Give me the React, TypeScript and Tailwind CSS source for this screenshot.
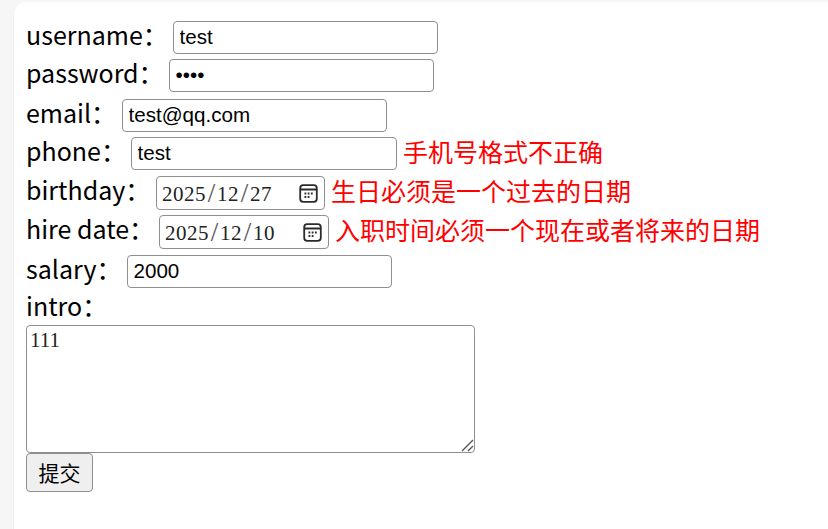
const fieldClass =
  "box-border h-[33px] rounded-[4px] border border-[#8f8f8f] bg-white pl-[5.5px] pr-[6px] pb-[2px] text-[20.6px] leading-none text-black outline-none [font-family:'Liberation_Sans',Arial,sans-serif]";

const rows = [
  { label: "username：", labelWidth: "w-[147px]", value: "test", h: "h-[38px]", w: "w-[265px]" },
  { label: "password：", labelWidth: "w-[143px]", value: "test", type: "password", h: "h-[40px]", w: "w-[265px]" },
  { label: "email：", labelWidth: "w-[96px]", value: "test@qq.com", h: "h-[38px]", w: "w-[265px]" },
  { label: "phone：", labelWidth: "w-[105px]", value: "test", h: "h-[39px]", w: "w-[266px]", error: "手机号格式不正确" },
];

function Slash() {
  return <span className="inline-block w-[11px] text-center align-[-1px] text-[27px] font-light leading-none tracking-normal text-[#555]">/</span>;
}

function DateField({ y, m, d, width }: { y: string; m: string; d: string; width: string }) {
  return (
    <div className={`box-border flex h-[34px] ${width} items-center justify-between rounded-[4px] border border-[#8f8f8f] bg-white pl-[5px] pr-[6px] text-[21px] leading-none tracking-[0.5px] text-[#222] [font-family:'Liberation_Serif',serif]`}>
      <span className="whitespace-nowrap">
        {y}
        <Slash />
        {m}
        <Slash />
        {d}
      </span>
      <svg width="19" height="19" viewBox="0 0 19 19" fill="none" stroke="#2b2b2b">
        <rect x="1.2" y="1.2" width="16.6" height="16.6" rx="3" strokeWidth="1.8" />
        <path d="M1.5 5.5h16" strokeWidth="2" />
        <path d="M5.5 9.5h1.8M8.7 9.5h1.8M11.9 9.5h1.8M5.5 13h1.8M8.7 13h1.8" strokeWidth="1.8" />
      </svg>
    </div>
  );
}

function Label({ text, width }: { text: string; width: string }) {
  return <span className={`${width} block shrink-0 whitespace-nowrap text-[25px] leading-[26px] text-black`}>{text}</span>;
}

function Err({ text }: { text: string }) {
  return <span className="ml-[6px] whitespace-nowrap text-[25px] leading-[29px] text-[#ff0000]">{text}</span>;
}

export default function App() {
  return (
    <div className="h-[529px] w-[828px] overflow-hidden bg-[#f6f6f6] pl-[13px] pt-[2px] [font-family:'Noto_Sans_CJK_SC','Noto_Sans',sans-serif]">
      <div className="h-full rounded-tl-[12px] border-l border-[#f0f0f0] bg-white pl-[12px] pt-[19px]">
        {rows.map((r) => (
          <div key={r.label} className={`flex items-start ${r.h}`}>
            <Label text={r.label} width={r.labelWidth} />
            <input readOnly type={r.type ?? "text"} value={r.value} className={`${fieldClass} ${r.w}`} />
            {r.error && <Err text={r.error} />}
          </div>
        ))}
        <div className="flex h-[39px] items-start">
          <Label text="birthday：" width="w-[130px]" />
          <DateField y="2025" m="12" d="27" width="w-[169px]" />
          <Err text="生日必须是一个过去的日期" />
        </div>
        <div className="flex h-[40px] items-start">
          <Label text="hire date：" width="w-[133px]" />
          <DateField y="2025" m="12" d="10" width="w-[170px]" />
          <Err text="入职时间必须一个现在或者将来的日期" />
        </div>
        <div className="flex h-[37px] items-start">
          <Label text="salary：" width="w-[101px]" />
          <input readOnly value="2000" className={`${fieldClass} w-[265px]`} />
        </div>
        <div className="h-[33px]">
          <Label text="intro：" width="w-auto" />
        </div>
        <div className="relative h-[128px] w-[449px]">
          <textarea
            readOnly
            value="111"
            className="box-border block h-[128px] w-[449px] resize-none rounded-[4px] border border-[#8f8f8f] bg-white px-[3px] py-[2px] text-[21px] leading-[24px] text-[#222] outline-none [font-family:'Liberation_Serif',serif]"
          />
          <svg className="absolute bottom-[1px] right-[1px]" width="13" height="13" viewBox="0 0 13 13" stroke="#555" strokeWidth="1.4">
            <path d="M1 12 12 1M7 12l5-5" />
          </svg>
        </div>
        <button className="box-border h-[39px] w-[67px] rounded-[4px] border-[1.5px] border-[#8f8f8f] bg-[#efefef] text-[21px] text-black">
          提交
        </button>
      </div>
    </div>
  );
}
